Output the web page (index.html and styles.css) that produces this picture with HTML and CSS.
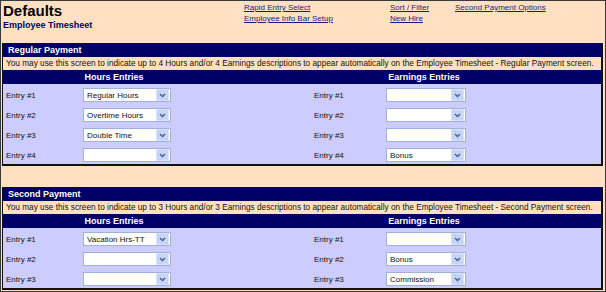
FILE: index.html
```html
<!DOCTYPE html>
<html>
<head>
<meta charset="utf-8">
<title>Defaults</title>
<link rel="stylesheet" href="styles.css">
</head>
<body>
<div class="frame">
  <div class="top">
    <div class="titles">
      <div class="title">Defaults</div>
      <div class="subtitle">Employee Timesheet</div>
    </div>
    <div class="links">
      <a href="#">Rapid Entry Select</a>
      <a href="#">Sort / Filter</a>
      <a href="#">Second Payment Options</a>
      <a href="#">Employee Info Bar Setup</a>
      <a href="#">New Hire</a>
      <span></span>
    </div>
  </div>

  <div class="section">
    <div class="sec-head">Regular Payment</div>
    <div class="sec-desc">You may use this screen to indicate up to 4 Hours and/or 4 Earnings descriptions to appear automatically on the Employee Timesheet - Regular Payment screen.</div>
    <div class="col-head"><span class="ch-left">Hours Entries</span><span class="ch-right">Earnings Entries</span></div>
    <div class="rows">
      <div class="lbl">Entry #1</div>
      <div class="sel wide"><span class="val">Regular Hours</span><span class="btn"><svg width="7" height="5" viewBox="0 0 7 5"><path d="M1 1 L3.5 3.5 L6 1" fill="none" stroke="#4a5c8c" stroke-width="1.4"/></svg></span></div>
      <div class="lbl r">Entry #1</div>
      <div class="sel narrow"><span class="val"></span><span class="btn"><svg width="7" height="5" viewBox="0 0 7 5"><path d="M1 1 L3.5 3.5 L6 1" fill="none" stroke="#4a5c8c" stroke-width="1.4"/></svg></span></div>

      <div class="lbl">Entry #2</div>
      <div class="sel wide"><span class="val">Overtime Hours</span><span class="btn"><svg width="7" height="5" viewBox="0 0 7 5"><path d="M1 1 L3.5 3.5 L6 1" fill="none" stroke="#4a5c8c" stroke-width="1.4"/></svg></span></div>
      <div class="lbl r">Entry #2</div>
      <div class="sel narrow"><span class="val"></span><span class="btn"><svg width="7" height="5" viewBox="0 0 7 5"><path d="M1 1 L3.5 3.5 L6 1" fill="none" stroke="#4a5c8c" stroke-width="1.4"/></svg></span></div>

      <div class="lbl">Entry #3</div>
      <div class="sel wide"><span class="val">Double Time</span><span class="btn"><svg width="7" height="5" viewBox="0 0 7 5"><path d="M1 1 L3.5 3.5 L6 1" fill="none" stroke="#4a5c8c" stroke-width="1.4"/></svg></span></div>
      <div class="lbl r">Entry #3</div>
      <div class="sel narrow"><span class="val"></span><span class="btn"><svg width="7" height="5" viewBox="0 0 7 5"><path d="M1 1 L3.5 3.5 L6 1" fill="none" stroke="#4a5c8c" stroke-width="1.4"/></svg></span></div>

      <div class="lbl">Entry #4</div>
      <div class="sel wide"><span class="val"></span><span class="btn"><svg width="7" height="5" viewBox="0 0 7 5"><path d="M1 1 L3.5 3.5 L6 1" fill="none" stroke="#4a5c8c" stroke-width="1.4"/></svg></span></div>
      <div class="lbl r">Entry #4</div>
      <div class="sel narrow"><span class="val">Bonus</span><span class="btn"><svg width="7" height="5" viewBox="0 0 7 5"><path d="M1 1 L3.5 3.5 L6 1" fill="none" stroke="#4a5c8c" stroke-width="1.4"/></svg></span></div>
    </div>
  </div>

  <div class="section second">
    <div class="sec-head">Second Payment</div>
    <div class="sec-desc">You may use this screen to indicate up to 3 Hours and/or 3 Earnings descriptions to appear automatically on the Employee Timesheet - Second Payment screen.</div>
    <div class="col-head"><span class="ch-left">Hours Entries</span><span class="ch-right">Earnings Entries</span></div>
    <div class="rows">
      <div class="lbl">Entry #1</div>
      <div class="sel wide"><span class="val">Vacation Hrs-TT</span><span class="btn"><svg width="7" height="5" viewBox="0 0 7 5"><path d="M1 1 L3.5 3.5 L6 1" fill="none" stroke="#4a5c8c" stroke-width="1.4"/></svg></span></div>
      <div class="lbl r">Entry #1</div>
      <div class="sel narrow"><span class="val"></span><span class="btn"><svg width="7" height="5" viewBox="0 0 7 5"><path d="M1 1 L3.5 3.5 L6 1" fill="none" stroke="#4a5c8c" stroke-width="1.4"/></svg></span></div>

      <div class="lbl">Entry #2</div>
      <div class="sel wide"><span class="val"></span><span class="btn"><svg width="7" height="5" viewBox="0 0 7 5"><path d="M1 1 L3.5 3.5 L6 1" fill="none" stroke="#4a5c8c" stroke-width="1.4"/></svg></span></div>
      <div class="lbl r">Entry #2</div>
      <div class="sel narrow"><span class="val">Bonus</span><span class="btn"><svg width="7" height="5" viewBox="0 0 7 5"><path d="M1 1 L3.5 3.5 L6 1" fill="none" stroke="#4a5c8c" stroke-width="1.4"/></svg></span></div>

      <div class="lbl">Entry #3</div>
      <div class="sel wide"><span class="val"></span><span class="btn"><svg width="7" height="5" viewBox="0 0 7 5"><path d="M1 1 L3.5 3.5 L6 1" fill="none" stroke="#4a5c8c" stroke-width="1.4"/></svg></span></div>
      <div class="lbl r">Entry #3</div>
      <div class="sel narrow"><span class="val">Commission</span><span class="btn"><svg width="7" height="5" viewBox="0 0 7 5"><path d="M1 1 L3.5 3.5 L6 1" fill="none" stroke="#4a5c8c" stroke-width="1.4"/></svg></span></div>
    </div>
  </div>
</div>
</body>
</html>
```

FILE: styles.css
```css
html, body {
  margin: 0;
  padding: 0;
  background: #ffe0c2;
}

.frame {
  width: 606px;
  height: 292px;
  box-sizing: border-box;
  border: 1px solid #3a3a3a;
  background: #ffe0c2;
  font-family: "Liberation Sans", Arial, sans-serif;
  color: #000;
  overflow: hidden;
}

.top {
  height: 42px;
  display: flex;
}

.titles {
  width: 241px;
  padding-left: 2px;
}

.title {
  font-size: 15px;
  font-weight: bold;
  line-height: 16px;
  padding-top: 2px;
}

.subtitle {
  font-size: 9px;
  font-weight: bold;
  color: #000066;
  line-height: 11px;
  padding-top: 1px;
}

.links {
  display: grid;
  grid-template-columns: 146px 65px auto;
  grid-auto-rows: 11px;
  padding-top: 1px;
  font-size: 8px;
  line-height: 11px;
}

.links a {
  color: #1a1a80;
  text-decoration: underline;
  white-space: nowrap;
}

.section {
  margin: 0 2px 0 1px;
  border: 1px solid #111;
  border-right-width: 2px;
  border-bottom-width: 2px;
  background: #ccccff;
}

.section.second {
  margin-top: 21px;
}

.sec-head {
  background: #000066;
  color: #fff;
  font-size: 9px;
  font-weight: bold;
  height: 13px;
  line-height: 13px;
  padding-left: 5px;
}

.sec-desc {
  background: #ffe0c2;
  color: #111;
  font-size: 8.25px;
  height: 13px;
  line-height: 13px;
  padding-left: 3px;
  white-space: nowrap;
}

.col-head {
  background: #000066;
  color: #fff;
  font-size: 9px;
  font-weight: bold;
  height: 14px;
  line-height: 14px;
  display: grid;
  grid-template-columns: 222px 1fr;
}

.ch-left {
  text-align: center;
}

.ch-right {
  text-align: center;
  padding-left: 22px;
}

.rows {
  display: grid;
  grid-template-columns: 80px 228px 75px 1fr;
  grid-auto-rows: 20px;
  align-items: center;
  font-size: 8px;
}

.lbl {
  padding-left: 3px;
  padding-top: 2px;
  color: #111;
}

.lbl.r {
  padding-left: 3px;
}

.sel {
  margin-top: 2px;
  height: 14px;
  box-sizing: border-box;
  border: 1px solid #9fb2d6;
  background: #fff;
  display: flex;
  align-items: center;
}

.sel.wide {
  width: 88px;
}

.sel.narrow {
  width: 80px;
}

.val {
  flex: 1;
  padding-left: 3px;
  white-space: nowrap;
  overflow: hidden;
  color: #111;
}

.btn {
  width: 11px;
  height: 10px;
  margin-right: 1px;
  background: #c6d4f8;
  border: 1px solid #d8e2fb;
  display: flex;
  align-items: center;
  justify-content: center;
}

.btn svg {
  display: block;
}
```
